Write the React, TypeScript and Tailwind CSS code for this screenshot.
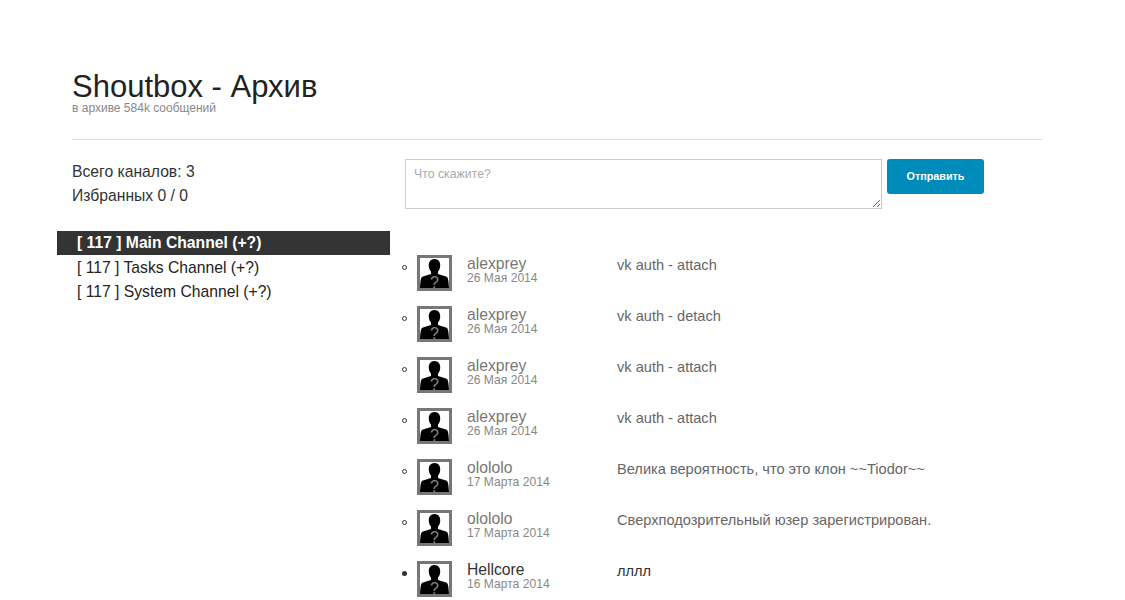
const messages = [
  { name: "alexprey", date: "26 Мая 2014", text: "vk auth - attach" },
  { name: "alexprey", date: "26 Мая 2014", text: "vk auth - detach" },
  { name: "alexprey", date: "26 Мая 2014", text: "vk auth - attach" },
  { name: "alexprey", date: "26 Мая 2014", text: "vk auth - attach" },
  { name: "olololo", date: "17 Марта 2014", text: "Велика вероятность, что это клон ~~Tiodor~~" },
  { name: "olololo", date: "17 Марта 2014", text: "Сверхподозрительный юзер зарегистрирован." },
  { name: "Hellcore", date: "16 Марта 2014", text: "лллл", active: true },
];

function Avatar() {
  return (
    <div className="h-[36px] w-[35px] shrink-0 border-[3px] border-[#777] bg-white">
      <svg viewBox="0 0 29 30" className="block h-[30px] w-[29px] overflow-visible">
        <path
          d="M14.5 1C10.5 1 8.5 4 8.8 8c.2 2.5 1 4.3 2.2 5.5V16L3 18.5C1 19.2.5 21 0 30h29c-.5-9-1-10.8-3-11.5L18 16v-2.5c1.2-1.2 2-3 2.2-5.5C20.5 4 18.500 1 14.5 1z"
          fill="#000"
        />
        <text x="14.5" y="30" textAnchor="middle" fontSize="16" fill="#888" fontFamily="Liberation Sans, sans-serif">
          ?
        </text>
      </svg>
    </div>
  );
}

export default function App() {
  return (
    <div className="h-[600px] overflow-hidden bg-white font-['Liberation_Sans',Arial,sans-serif]">
      <header className="mx-[72px] w-[970px] border-b border-[#ddd] pt-[71px] pb-[25px]">
        <h1 className="text-[31px] leading-[31px] text-[#222]">Shoutbox - Архив</h1>
        <p className="mt-[1px] text-[12px] leading-[11px] text-[#888]">в архиве 584k сообщений</p>
      </header>

      <div className="mt-[19px] ml-[57px] flex">
        <aside className="w-[333px] shrink-0">
          <div className="mt-[1px] pl-[15px] text-[15.7px] leading-[24px] text-[#333]">
            <p>Всего каналов: 3</p>
            <p>Избранных 0 / 0</p>
          </div>
          <ul className="mt-[23px] text-[15.7px] leading-[24px] text-[#222]">
            <li className="bg-[#333] pl-[20px] font-bold text-white">[ 117 ] Main Channel (+?)</li>
            <li className="mt-[1px] pl-[20px]">[ 117 ] Tasks Channel (+?)</li>
            <li className="pl-[20px]">[ 117 ] System Channel (+?)</li>
          </ul>
        </aside>

        <main className="ml-[15px] flex-1">
          <form className="flex items-start gap-[5px]">
            <textarea
              placeholder="Что скажите?"
              className="h-[50px] w-[477px] border border-[#ccc] px-[8px] py-[6px] text-[12.3px] leading-[16px] placeholder:text-[#aaa]"
            />
            <button
              type="button"
              className="h-[35px] w-[97px] rounded-[3px] bg-[#008cba] text-[10.8px] font-bold text-white"
            >
              Отправить
            </button>
          </form>

          <ul className="mt-[46px] -ml-[3px] flex flex-col gap-[15px]">
            {messages.map((m, i) => (
              <li key={i} className="flex h-[36px] items-start">
                <span
                  className={
                    m.active
                      ? "mt-[10px] mr-[10px] h-[5px] w-[5px] shrink-0 rounded-full bg-[#333]"
                      : "mt-[10px] mr-[10px] h-[5px] w-[5px] shrink-0 rounded-full border border-[#333]"
                  }
                />
                <Avatar />
                <div className="ml-[15px] w-[150px] shrink-0 pt-[1px]">
                  <div className={m.active ? "text-[15.7px] leading-[16px] text-[#333]" : "text-[15.7px] leading-[16px] text-[#777]"}>
                    {m.name}
                  </div>
                  <div className="text-[12.1px] leading-[12px] text-[#888]">{m.date}</div>
                </div>
                <div className={m.active ? "pt-[1px] text-[14.6px] leading-[18px] text-[#333]" : "pt-[1px] text-[14.6px] leading-[18px] text-[#666]"}>
                  {m.text}
                </div>
              </li>
            ))}
          </ul>
        </main>
      </div>
    </div>
  );
}
